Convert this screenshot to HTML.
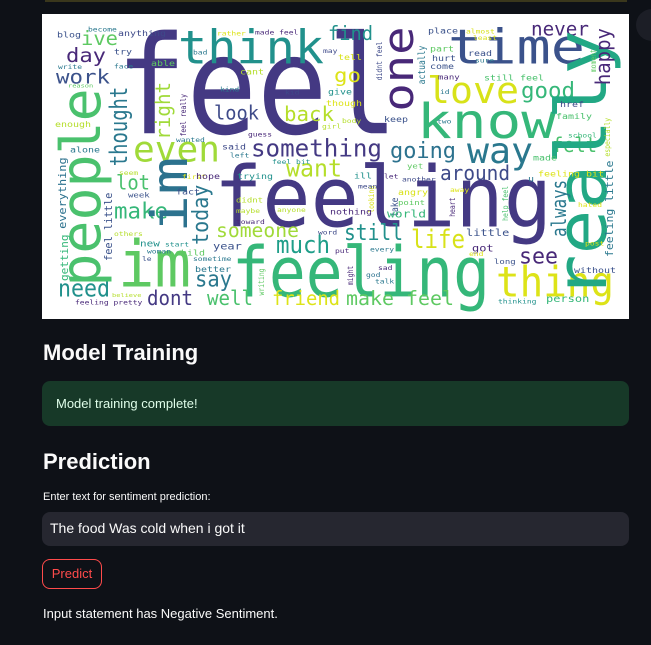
<!DOCTYPE html>
<html><head><meta charset="utf-8"><style>
html,body{margin:0;padding:0;background:#0e1117;width:651px;height:645px;overflow:hidden;font-family:"Liberation Sans",sans-serif;color:#fafafa;position:relative}
.a{position:absolute}
h2{position:absolute;margin:0;font-size:22px;font-weight:bold;color:#fafafa}
</style></head><body>
<div class="a" style="left:45px;top:0;width:582px;height:2px;background:#3a371c"></div>
<div class="a" style="left:636px;top:9px;width:34px;height:32px;border-radius:16px;background:#1c1e26"></div>
<svg class="a" style="left:42px;top:14px" width="587" height="305" viewBox="42 14 587 305" font-family="DejaVu Sans Mono, DejaVu Sans, monospace">
<rect x="42" y="14" width="587" height="305" fill="#fff"/>
<g transform="scale(1,0.803)">
<text x="116" y="166" font-size="170" fill="#443983" textLength="282" lengthAdjust="spacingAndGlyphs">feel</text>
<text x="214" y="282" font-size="104" fill="#443983" textLength="338" lengthAdjust="spacingAndGlyphs">feeling</text>
<text x="232" y="369" font-size="87" fill="#35b779" textLength="258" lengthAdjust="spacingAndGlyphs">feeling</text>
<text x="118" y="357" font-size="80" fill="#5ec962" textLength="73" lengthAdjust="spacingAndGlyphs">im</text>
<text x="178" y="79" font-size="58" fill="#21918c" textLength="146" lengthAdjust="spacingAndGlyphs">think</text>
<text x="448" y="79" font-size="60" fill="#3b528b" textLength="137" lengthAdjust="spacingAndGlyphs">time</text>
<text x="417" y="172" font-size="60" fill="#35b779" textLength="139" lengthAdjust="spacingAndGlyphs">know</text>
<text x="427" y="128" font-size="45" fill="#d8e219" textLength="92" lengthAdjust="spacingAndGlyphs">love</text>
<text x="496" y="369" font-size="52" fill="#dde318" textLength="118" lengthAdjust="spacingAndGlyphs">thing</text>
<text x="133" y="201" font-size="44" fill="#a0da39" textLength="87" lengthAdjust="spacingAndGlyphs">even</text>
<text x="467" y="203" font-size="44" fill="#2a788e" textLength="66" lengthAdjust="spacingAndGlyphs">way</text>
<text x="251" y="195" font-size="30" fill="#443983" textLength="131" lengthAdjust="spacingAndGlyphs">something</text>
<text x="390" y="197" font-size="28" fill="#2c728e" textLength="66" lengthAdjust="spacingAndGlyphs">going</text>
<text x="440" y="224" font-size="26" fill="#3e4a89" textLength="70" lengthAdjust="spacingAndGlyphs">around</text>
<text x="116" y="236" font-size="26" fill="#4ac16d" textLength="34" lengthAdjust="spacingAndGlyphs">lot</text>
<text x="114" y="272" font-size="28" fill="#35b779" textLength="54" lengthAdjust="spacingAndGlyphs">make</text>
<text x="216" y="295" font-size="24" fill="#a0da39" textLength="83" lengthAdjust="spacingAndGlyphs">someone</text>
<text x="276" y="315" font-size="30" fill="#1f9e89" textLength="54" lengthAdjust="spacingAndGlyphs">much</text>
<text x="344" y="299" font-size="28" fill="#21918c" textLength="59" lengthAdjust="spacingAndGlyphs">still</text>
<text x="411" y="309" font-size="32" fill="#d8e219" textLength="54" lengthAdjust="spacingAndGlyphs">life</text>
<text x="286" y="220" font-size="30" fill="#b5de2b" textLength="56" lengthAdjust="spacingAndGlyphs">want</text>
<text x="58" y="369" font-size="30" fill="#21918c" textLength="52" lengthAdjust="spacingAndGlyphs">need</text>
<text x="147" y="380" font-size="26" fill="#443983" textLength="46" lengthAdjust="spacingAndGlyphs">dont</text>
<text x="207" y="380" font-size="26" fill="#4ac16d" textLength="46" lengthAdjust="spacingAndGlyphs">well</text>
<text x="272" y="380" font-size="24" fill="#dde318" textLength="68" lengthAdjust="spacingAndGlyphs">friend</text>
<text x="346" y="380" font-size="24" fill="#5ec962" textLength="108" lengthAdjust="spacingAndGlyphs">make feel</text>
<text x="195" y="357" font-size="28" fill="#2a788e" textLength="37" lengthAdjust="spacingAndGlyphs">say</text>
<text x="519" y="328" font-size="28" fill="#482878" textLength="39" lengthAdjust="spacingAndGlyphs">see</text>
<text x="521" y="122" font-size="28" fill="#35b779" textLength="54" lengthAdjust="spacingAndGlyphs">good</text>
<text x="531" y="44" font-size="24" fill="#482878" textLength="58" lengthAdjust="spacingAndGlyphs">never</text>
<text x="552" y="189" font-size="26" fill="#4ac16d" textLength="45" lengthAdjust="spacingAndGlyphs">felt</text>
<text x="328" y="50" font-size="24" fill="#21918c" textLength="45" lengthAdjust="spacingAndGlyphs">find</text>
<text x="334" y="102" font-size="24" fill="#dde318" textLength="27" lengthAdjust="spacingAndGlyphs">go</text>
<text x="214" y="149" font-size="24" fill="#3e4a89" textLength="45" lengthAdjust="spacingAndGlyphs">look</text>
<text x="284" y="151" font-size="26" fill="#b5de2b" textLength="50" lengthAdjust="spacingAndGlyphs">back</text>
<text x="66" y="77" font-size="24" fill="#482878" textLength="40" lengthAdjust="spacingAndGlyphs">day</text>
<text x="81" y="56" font-size="24" fill="#5ec962" textLength="37" lengthAdjust="spacingAndGlyphs">ive</text>
<text x="56" y="104" font-size="24" fill="#3b528b" textLength="54" lengthAdjust="spacingAndGlyphs">work</text>
<g transform="translate(100,357) rotate(-90)"><text font-size="55" fill="#4ac16d" textLength="247" lengthAdjust="spacingAndGlyphs">people</text></g>
<g transform="translate(187,290) rotate(-90)"><text font-size="50" fill="#2c728e" textLength="95" lengthAdjust="spacingAndGlyphs">im</text></g>
<g transform="translate(413,139) rotate(-90)"><text font-size="42" fill="#482878" textLength="106" lengthAdjust="spacingAndGlyphs">one</text></g>
<g transform="translate(606,373) rotate(-90)"><text font-size="70" fill="#22a884" textLength="336" lengthAdjust="spacingAndGlyphs">really</text></g>
<g transform="translate(127,207) rotate(-90)"><text font-size="24" fill="#2a788e" textLength="99" lengthAdjust="spacingAndGlyphs">thought</text></g>
<g transform="translate(170,174) rotate(-90)"><text font-size="20" fill="#a0da39" textLength="72" lengthAdjust="spacingAndGlyphs">right</text></g>
<g transform="translate(208,305) rotate(-90)"><text font-size="22" fill="#2a788e" textLength="75" lengthAdjust="spacingAndGlyphs">today</text></g>
<g transform="translate(610,106) rotate(-90)"><text font-size="20" fill="#482878" textLength="71" lengthAdjust="spacingAndGlyphs">happy</text></g>
<g transform="translate(566,295) rotate(-90)"><text font-size="20" fill="#2a788e" textLength="71" lengthAdjust="spacingAndGlyphs">always</text></g>
<g transform="translate(66,285) rotate(-90)"><text font-size="11" fill="#2c728e" textLength="89" lengthAdjust="spacingAndGlyphs">everything</text></g>
<g transform="translate(68,350) rotate(-90)"><text font-size="11" fill="#35b779" textLength="58" lengthAdjust="spacingAndGlyphs">getting</text></g>
<g transform="translate(112,325) rotate(-90)"><text font-size="11" fill="#3b528b" textLength="85" lengthAdjust="spacingAndGlyphs">feel little</text></g>
<g transform="translate(613,320) rotate(-90)"><text font-size="11" fill="#2a788e" textLength="120" lengthAdjust="spacingAndGlyphs">feeling little</text></g>
<g transform="translate(425,105) rotate(-90)"><text font-size="10" fill="#2a788e">actually</text></g>
<g transform="translate(382,100) rotate(-90)"><text font-size="8" fill="#3e4a89">didnt feel</text></g>
<g transform="translate(186,170) rotate(-90)"><text font-size="8" fill="#482878">feel really</text></g>
<g transform="translate(398,270) rotate(-90)"><text font-size="10" fill="#3b528b">take</text></g>
<g transform="translate(374,265) rotate(-90)"><text font-size="8" fill="#d8e219">looking</text></g>
<g transform="translate(455,270) rotate(-90)"><text font-size="8" fill="#482878">heart</text></g>
<g transform="translate(508,275) rotate(-90)"><text font-size="8" fill="#4ac16d">help feel</text></g>
<g transform="translate(264,368) rotate(-90)"><text font-size="8" fill="#5ec962">writing</text></g>
<g transform="translate(353,355) rotate(-90)"><text font-size="8" fill="#482878">might</text></g>
<g transform="translate(610,195) rotate(-90)"><text font-size="8" fill="#b5de2b">especially</text></g>
<g transform="translate(596,90) rotate(-90)"><text font-size="8" fill="#5ec962">moment</text></g>
<g font-size="10">
<text x="57" y="47" fill="#3b528b">blog</text><text x="88" y="39" fill="#2a788e" font-size="8">become</text>
<text x="118" y="45" fill="#3e4a89">anything</text><text x="217" y="44" fill="#dde318" font-size="8">rather</text>
<text x="255" y="43" fill="#482878" font-size="8">made feel</text><text x="428" y="42" fill="#3b528b">place</text>
<text x="466" y="42" fill="#d8e219" font-size="8">almost</text><text x="473" y="50" fill="#d8e219" font-size="8">least</text>
<text x="114" y="68" fill="#3b528b">try</text><text x="193" y="68" fill="#2a788e" font-size="8">bad</text>
<text x="323" y="66" fill="#3e4a89" font-size="8">may</text><text x="338" y="75" fill="#d8e219">tell</text>
<text x="430" y="64" fill="#5ec962">part</text><text x="432" y="76" fill="#3b528b">hurt</text>
<text x="468" y="70" fill="#3b528b">read</text><text x="475" y="78" fill="#2a788e" font-size="8">sure</text>
<text x="58" y="86" fill="#2a788e" font-size="8">write</text><text x="114" y="85" fill="#2a788e" font-size="8">face</text>
<text x="151" y="82" fill="#5ec962">able</text><text x="240" y="93" fill="#b5de2b">cant</text>
<text x="430" y="86" fill="#3b528b">come</text><text x="438" y="99" fill="#482878" font-size="9">many</text>
<text x="484" y="100" fill="#4ac16d">still feel</text><text x="68" y="109" fill="#5ec962" font-size="7">reason</text>
<text x="220" y="114" fill="#2a788e" font-size="8">kind</text><text x="285" y="118" fill="#3e4a89" font-size="8">kid</text>
<text x="328" y="118" fill="#21918c">give</text><text x="326" y="132" fill="#dde318">though</text>
<text x="440" y="117" fill="#2a788e" font-size="8">id</text><text x="560" y="133" fill="#3e4a89">href</text>
<text x="556" y="148" fill="#4ac16d">family</text><text x="342" y="153" fill="#b5de2b" font-size="8">body</text>
<text x="322" y="160" fill="#b5de2b" font-size="8">girl</text><text x="384" y="152" fill="#3b528b">keep</text>
<text x="437" y="154" fill="#2a788e" font-size="8">two</text><text x="55" y="158" fill="#b5de2b">enough</text>
<text x="248" y="170" fill="#482878" font-size="8">guess</text><text x="176" y="177" fill="#2a788e" font-size="8">wanted</text>
<text x="568" y="171" fill="#35b779" font-size="8">school</text><text x="70" y="190" fill="#2a788e">alone</text>
<text x="222" y="186" fill="#3e4a89">said</text><text x="230" y="196" fill="#2a788e" font-size="8">left</text>
<text x="272" y="204" fill="#21918c" font-size="8">feel bit</text><text x="407" y="210" fill="#5ec962" font-size="9">yet</text>
<text x="533" y="200" fill="#4ac16d">made</text><text x="119" y="218" fill="#b5de2b" font-size="8">seem</text>
<text x="182" y="223" fill="#dde318" font-size="8">first</text><text x="196" y="223" fill="#482878">hope</text>
<text x="237" y="223" fill="#21918c">trying</text><text x="354" y="222" fill="#21918c">ill</text>
<text x="384" y="222" fill="#482878" font-size="8">let</text><text x="402" y="226" fill="#3e4a89" font-size="8">another</text>
<text x="538" y="220" fill="#dde318">feeling bit</text><text x="528" y="226" fill="#2a788e">u</text>
<text x="128" y="246" fill="#3b528b" font-size="9">week</text><text x="176" y="242" fill="#3b528b">fact</text>
<text x="358" y="235" fill="#3e4a89" font-size="8">mean</text><text x="398" y="243" fill="#d8e219">angry</text>
<text x="450" y="239" fill="#dde318" font-size="8">away</text><text x="236" y="252" fill="#b5de2b" font-size="9">didnt</text>
<text x="398" y="255" fill="#5ec962" font-size="9">point</text><text x="578" y="258" fill="#dde318" font-size="8">hated</text>
<text x="236" y="265" fill="#b5de2b" font-size="8">maybe</text><text x="277" y="264" fill="#b5de2b" font-size="8">anyone</text>
<text x="330" y="267" fill="#482878">nothing</text><text x="387" y="271" fill="#35b779" font-size="13">world</text>
<text x="236" y="279" fill="#482878" font-size="8">toward</text><text x="114" y="294" fill="#b5de2b" font-size="8">others</text>
<text x="318" y="292" fill="#3e4a89" font-size="8">word</text><text x="466" y="294" fill="#3b528b" font-size="12">little</text>
<text x="140" y="307" fill="#21918c" font-size="11">new</text><text x="165" y="307" fill="#21918c" font-size="8">start</text>
<text x="213" y="311" fill="#3b528b" font-size="12">year</text><text x="147" y="316" fill="#2a788e" font-size="8">woman</text>
<text x="175" y="318" fill="#5ec962">child</text><text x="335" y="315" fill="#482878" font-size="8">put</text>
<text x="370" y="313" fill="#2a788e" font-size="8">every</text><text x="472" y="313" fill="#482878" font-size="12">got</text>
<text x="585" y="306" fill="#dde318" font-size="8">post</text><text x="142" y="325" fill="#3b528b" font-size="8">le</text>
<text x="193" y="325" fill="#2a788e" font-size="8">sometime</text><text x="469" y="319" fill="#dde318" font-size="8">end</text>
<text x="494" y="329" fill="#3b528b" font-size="9">long</text><text x="195" y="339" fill="#2a788e">better</text>
<text x="378" y="336" fill="#482878" font-size="8">sad</text><text x="574" y="340" fill="#3b528b">without</text>
<text x="366" y="345" fill="#2c728e" font-size="8">god</text><text x="375" y="353" fill="#2a788e" font-size="8">talk</text>
<text x="112" y="370" fill="#b5de2b" font-size="7">believe</text><text x="75" y="379" fill="#482878" font-size="8">feeling pretty</text>
<text x="498" y="378" fill="#21918c" font-size="8">thinking</text><text x="546" y="376" fill="#35b779" font-size="12">person</text>
</g>
</g>
</svg>

<h2 style="left:43px;top:340px">Model Training</h2>
<div class="a" style="left:42px;top:381px;width:587px;height:45px;background:#173928;border-radius:8px"></div>
<div class="a" style="left:56px;top:396px;font-size:13px;color:#dffde9">Model training complete!</div>
<h2 style="left:43px;top:449px">Prediction</h2>
<div class="a" style="left:43px;top:491px;font-size:11px;color:#fafafa">Enter text for sentiment prediction:</div>
<div class="a" style="left:42px;top:512px;width:587px;height:34px;background:#262730;border-radius:8px"></div>
<div class="a" style="left:50px;top:520px;font-size:14px;color:#fafafa">The food Was cold when i got it</div>
<div class="a" style="left:42px;top:559px;width:60px;height:30px;border:1px solid #ff4b4b;border-radius:8px;box-sizing:border-box;color:#ff4b4b;font-size:13px;line-height:28px;text-align:center">Predict</div>
<div class="a" style="left:43px;top:606px;font-size:13px;color:#fafafa">Input statement has Negative Sentiment.</div>
</body></html>
